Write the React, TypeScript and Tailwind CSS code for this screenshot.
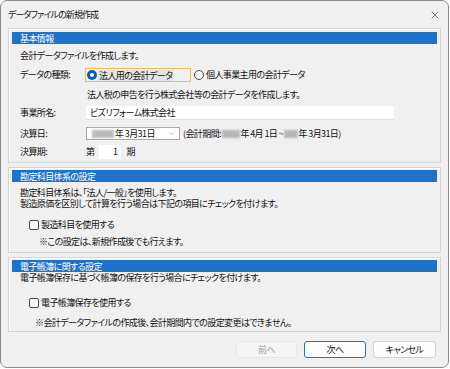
import { X, ChevronDown } from "lucide-react";

function Blur({ w }: { w: number }) {
    return (
        <span
            className="inline-block h-[8px] bg-[#a8a8a8] blur-[1px] opacity-80 align-middle"
            style={{ width: w }}
        />
    );
}

function SectionHeader({ title }: { title: string }) {
    return (
        <div className="h-[12px] bg-[#1f72c9] text-white pl-[8px] flex items-center leading-none">
            {title}
        </div>
    );
}

function Radio({ checked }: { checked: boolean }) {
    return checked ? (
        <span className="w-[10px] h-[10px] rounded-full bg-[#0a5fb4] flex items-center justify-center shrink-0">
            <span className="w-[4px] h-[4px] rounded-full bg-white" />
        </span>
    ) : (
        <span className="w-[10px] h-[10px] rounded-full border border-[#4a4a4a] bg-[#f7f7f7] shrink-0" />
    );
}

function Checkbox() {
    return <span className="w-[10px] h-[10px] rounded-[2px] border border-[#4a4a4a] bg-[#f7f7f7] shrink-0" />;
}

export default function App() {
    return (
        <div className="w-[450px] h-[369px] bg-white font-['Noto_Sans_CJK_JP',sans-serif] [font-feature-settings:'palt'] text-[9px] tracking-[-0.6px] text-[#111]">
            <div className="w-[449px] h-[368px] bg-[#f0f0f0] border border-[#8c8c8c] rounded-[7px] flex flex-col overflow-hidden">
                {/* title bar */}
                <div className="h-[27px] flex items-center justify-between pl-[7px] pr-[6px] shrink-0">
                    <span className="text-[9px] tracking-[-0.9px]">データファイルの新規作成</span>
                    <X size={12} strokeWidth={1.2} className="text-[#222] mr-[1px]" />
                </div>

                {/* 基本情報 */}
                <div className="mx-[7px] h-[135px] border border-[#d6d6d6] shadow-[inset_1px_1px_0_#fff] px-[3px] pt-[3px] shrink-0">
                    <SectionHeader title="基本情報" />
                    <div className="pl-[8px] mt-[6px] h-[12px] flex items-center">会計データファイルを作成します。</div>

                    <div className="mt-[6px] h-[14px] flex items-center">
                        <span className="pl-[8px] w-[73px]">データの種類:</span>
                        <div className="w-[106px] h-[14px] border border-[#f0c04a] flex items-center pl-[1px] gap-[1px]">
                            <Radio checked />
                            <span className="bg-[#e4e4e4] px-[1px] leading-[11px]">法人用の会計データ</span>
                        </div>
                        <div className="flex items-center gap-[2px] ml-[3px]">
                            <Radio checked={false} />
                            <span>個人事業主用の会計データ</span>
                        </div>
                    </div>

                    <div className="mt-[7px] h-[12px] flex items-center pl-[75px]">
                        法人税の申告を行う株式会社等の会計データを作成します。
                    </div>

                    <div className="mt-[5px] h-[14px] flex items-center">
                        <span className="pl-[8px] w-[74px]">事業所名:</span>
                        <div className="w-[308px] h-[14px] bg-white border-b border-[#e2e2e2] flex items-center pl-[4px]">
                            ビズリフォーム株式会社
                        </div>
                    </div>

                    <div className="mt-[7px] h-[13px] flex items-center">
                        <span className="pl-[8px] w-[74px]">決算日:</span>
                        <div className="w-[94px] h-[13px] bg-white border border-[#a9a9a9] flex items-center pl-[5px] pr-[3px]">
                            <Blur w={22} />
                            <span className="ml-[1px]">年 3月31日</span>
                            <ChevronDown size={9} strokeWidth={1} className="ml-auto text-[#555]" />
                        </div>
                        <span className="ml-[3px] flex items-center whitespace-nowrap">
                            (会計期間:&nbsp;
                            <Blur w={18} />
                            年 4月 1日 ~&nbsp;
                            <Blur w={14} />
                            年 3月31日)
                        </span>
                    </div>

                    <div className="mt-[5px] h-[14px] flex items-center">
                        <span className="pl-[8px] w-[74px]">決算期:</span>
                        <span>第</span>
                        <div className="ml-[5px] w-[22px] h-[14px] bg-white flex items-center justify-end pr-[4px]">1</div>
                        <span className="ml-[5px]">期</span>
                    </div>
                </div>

                {/* 勘定科目体系の設定 */}
                <div className="mx-[7px] mt-[4px] h-[86px] border border-[#d6d6d6] shadow-[inset_1px_1px_0_#fff] px-[3px] pt-[2px] shrink-0">
                    <SectionHeader title="勘定科目体系の設定" />
                    <div className="pl-[8px] mt-[6px] leading-[10.5px]">
                        <div>勘定科目体系は、「法人/一般」を使用します。</div>
                        <div>製造原価を区別して計算を行う場合は下記の項目にチェックを付けます。</div>
                    </div>
                    <div className="mt-[10px] h-[12px] flex items-center pl-[17px] gap-[2px]">
                        <Checkbox />
                        <span>製造科目を使用する</span>
                    </div>
                    <div className="mt-[5px] h-[12px] flex items-center pl-[27px]">※この設定は、新規作成後でも行えます。</div>
                </div>

                {/* 電子帳簿に関する設定 */}
                <div className="mx-[7px] mt-[4px] h-[75px] border border-[#d6d6d6] shadow-[inset_1px_1px_0_#fff] px-[3px] pt-[2px] shrink-0">
                    <SectionHeader title="電子帳簿に関する設定" />
                    <div className="pl-[8px] mt-[1px] h-[10px] leading-[10px] flex items-center">
                        電子帳簿保存に基づく帳簿の保存を行う場合にチェックを付けます。
                    </div>
                    <div className="mt-[14px] h-[12px] flex items-center pl-[17px] gap-[2px]">
                        <Checkbox />
                        <span>電子帳簿保存を使用する</span>
                    </div>
                    <div className="mt-[8px] h-[12px] flex items-center pl-[23px]">
                        ※会計データファイルの作成後、会計期間内での設定変更はできません。
                    </div>
                </div>

                {/* buttons */}
                <div className="mt-[9px] flex justify-end gap-[7px] pr-[12px]">
                    <button className="w-[61px] h-[17px] rounded-[3px] bg-[#f5f5f5] border border-[#e6e6e6] text-[#a0a0a0] leading-none">
                        前へ
                    </button>
                    <button className="w-[62px] h-[17px] rounded-[3px] bg-[#fdfdfd] border border-[#2a6fc0] leading-none">
                        次へ
                    </button>
                    <button className="w-[63px] h-[17px] rounded-[3px] bg-[#fdfdfd] border border-[#d0d0d0] leading-none">
                        キャンセル
                    </button>
                </div>
            </div>
        </div>
    );
}
